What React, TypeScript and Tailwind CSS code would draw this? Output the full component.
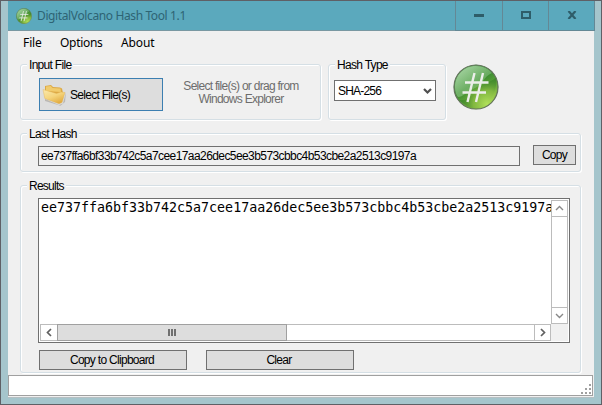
import React from "react";

const HASH = "ee737ffa6bf33b742c5a7cee17aa26dec5ee3b573cbbc4b53cbe2a2513c9197a";

function HashBall({ size, id }: { size: number; id: string }) {
  return (
    <svg width={size} height={size} viewBox="0 0 46 46" className="block shrink-0">
      <defs>
        <linearGradient id={id + "a"} x1="0.1" y1="0" x2="0.75" y2="1">
          <stop offset="0" stopColor="#78b978" />
          <stop offset="0.45" stopColor="#398b30" />
          <stop offset="1" stopColor="#a2d04e" />
        </linearGradient>
        <radialGradient id={id + "b"} cx="0.75" cy="0.88" r="0.62">
          <stop offset="0" stopColor="#b0e05a" />
          <stop offset="0.5" stopColor="#8dc044" stopOpacity="0.8" />
          <stop offset="1" stopColor="#3f8a2a" stopOpacity="0" />
        </radialGradient>
        <linearGradient id={id + "c"} x1="0" y1="0" x2="1" y2="1">
          <stop offset="0" stopColor="#c0e4bc" stopOpacity="0.75" />
          <stop offset="1" stopColor="#7fbc72" stopOpacity="0.3" />
        </linearGradient>
      </defs>
      <circle cx="23" cy="23" r="22.2" fill={`url(#${id}a)`} />
      <path d="M6 36C14 38 21 30 26 24C31 18 40 18 43 13C45 27 37 42 23 45C16 44 11 40 6 36Z" fill="#28701f" opacity="0.45" />
      <circle cx="23" cy="23" r="22" fill={`url(#${id}b)`} />
      <path d="M2 23C2 11 11 2 23 2C30 2 36 5 39 9C31 12 29 22 20 25C13 28 10 33 5 33C3 31 2 27 2 23Z" fill={`url(#${id}c)`} />
      <circle cx="23" cy="23" r="22" fill="none" stroke="#66745f" strokeWidth="1.2" />
      <path d="M21.5 9L14.5 38M30 9L23 38M12 18.5H35.5M9.5 28.5H33" fill="none" stroke="#eceeea" strokeWidth="2.4" />
    </svg>
  );
}

function Folder() {
  return (
    <svg width="26" height="24" viewBox="0 0 26 24" className="block shrink-0">
      <defs>
        <linearGradient id="folderFront" x1="0" y1="0" x2="0.6" y2="1">
          <stop offset="0" stopColor="#fae9ae" />
          <stop offset="0.55" stopColor="#f5d57d" />
          <stop offset="1" stopColor="#e3ad42" />
        </linearGradient>
      </defs>
      <path d="M3 16L17 22L21 20.5L24 9L23 19L18.5 22.7L3 18Z" fill="#9a948a" opacity="0.5" />
      <path d="M3 3L9 2L11 4L18 4.5L20 5.5L21 10L18 17L3 13Z" fill="#dda944" />
      <path d="M4 3.5L8.8 3L10.5 5L18.5 5.6L19 9L4 8Z" fill="#f1cb6c" />
      <path d="M1 6.5L14.5 10.5L19 9L23 9.5L20 19.5L17 20.7L2.8 15.5Z" fill="url(#folderFront)" stroke="#e0b050" strokeWidth="0.4" />
    </svg>
  );
}

function Group({ title, titleClass, className, children }: { title: string; titleClass: string; className: string; children: React.ReactNode }) {
  return (
    <section className={"relative rounded-[3px] border border-[#d5dfe5] shadow-[inset_1px_1px_0_#fff,1px_1px_0_#fff] " + className}>
      <h2 className={"absolute left-[6px] -top-[8px] h-4 bg-[#f0f0f0] px-[2px] leading-[16px] whitespace-nowrap " + titleClass}>{title}</h2>
      {children}
    </section>
  );
}

const chevrons = {
  up: "M1 6L4.5 2.5L8 6",
  down: "M1 3L4.5 6.5L8 3",
  left: "M6 1L2.5 4.5L6 8",
  right: "M3 1L6.5 4.5L3 8",
};

function Chevron({ dir, color = "#606060", width = 1.7 }: { dir: keyof typeof chevrons; color?: string; width?: number }) {
  return (
    <svg width="9" height="9" viewBox="0 0 9 9" className="block shrink-0">
      <path d={chevrons[dir]} fill="none" stroke={color} strokeWidth={width} />
    </svg>
  );
}

function Grip() {
  return (
    <svg width="10" height="10" viewBox="0 0 10 10" className="block" fill="#a0a0a0" shapeRendering="crispEdges">
      <path d="M8 0h2v2h-2zM4 4h2v2h-2zM8 4h2v2h-2zM0 8h2v2h-2zM4 8h2v2h-2zM8 8h2v2h-2z" />
    </svg>
  );
}

const button = "flex items-center justify-center border border-[#707070] bg-[#dddddd] whitespace-nowrap";

export default function App() {
  return (
    <div className="flex h-[405px] w-[602px] flex-col overflow-hidden border border-[#5f6066] bg-[#a5c5cc] px-[7px] font-['Liberation_Sans',Arial,sans-serif] text-[12px] text-black">
      <header className="flex h-[30px] w-[587px] shrink-0 border-b border-[#7998a2] bg-[#5ba9bd] font-['Noto_Sans',sans-serif]">
        <div className="flex flex-1 items-center pl-[8px]">
          <HashBall size={16} id="small" />
          <h1 className="ml-[5px] text-[12px] tracking-[-0.38px] whitespace-nowrap text-[#2e6474]">DigitalVolcano Hash Tool 1.1</h1>
        </div>
        <div className="flex h-[30px] text-[#2e5d69]">
          <button className="flex w-[48px] items-center justify-center border-x border-b border-[#648895]">
            <span className="h-[3px] w-[10px] bg-[#2e5d69]" />
          </button>
          <button className="flex w-[46px] items-center justify-center border-r border-b border-[#648895]">
            <span className="mb-px h-[8px] w-[10px] border-2 border-[#2e5d69]" />
          </button>
          <button className="flex w-[46px] items-center justify-center border-r border-b border-[#648895]">
            <svg width="10" height="8" viewBox="0 0 10 8" className="mb-px">
              <path d="M1.5 0L8.5 8M8.5 0L1.5 8" stroke="currentColor" strokeWidth="2.2" />
            </svg>
          </button>
        </div>
      </header>

      <div className="flex h-[366px] w-[586px] shrink-0 flex-col bg-[#f0f0f0]">
        <nav className="flex h-[33px] shrink-0 pt-[3px] pl-[15px] font-['Noto_Sans',sans-serif] text-[12px] leading-[18px] tracking-[-0.1px]">
          <span className="w-[37px]">File</span>
          <span className="w-[61px] tracking-[-0.3px]">Options</span>
          <span>About</span>
        </nav>

        <main className="flex flex-col pl-[12px]">
          <div className="flex">
            <Group title="Input File" titleClass="tracking-[-0.7px]" className="h-[56px] w-[301px]">
              <div className="flex pt-[13px] pl-[18px]">
                <button className="flex h-[33px] w-[124px] items-center border border-[#3c7fb1] bg-[#dddddd] pl-[2px]">
                  <Folder />
                  <span className="ml-[2px] tracking-[-0.72px] whitespace-nowrap">Select File(s)</span>
                </button>
                <p className="ml-[14px] w-[128px] pt-[2px] text-center leading-[13px] tracking-[-0.72px] whitespace-nowrap text-[#6d6d6d]">
                  Select file(s) or drag from
                  <br />
                  Windows Explorer
                </p>
              </div>
            </Group>
            <Group title="Hash Type" titleClass="tracking-[-0.7px]" className="ml-[7px] h-[56px] w-[118px]">
              <div className="mt-[15px] ml-[5px] flex h-[21px] w-[102px] items-center justify-between border border-[#707070] bg-white pr-[3px] pl-[3px]">
                <span className="tracking-[-0.8px]">SHA-256</span>
                <Chevron dir="down" color="#505050" width={2.2} />
              </div>
            </Group>
            <div className="ml-[7px]">
              <HashBall size={46} id="large" />
            </div>
          </div>

          <Group title="Last Hash" titleClass="tracking-[-0.7px]" className="mt-[13px] h-[39px] w-[561px]">
            <div className="flex pt-[11px] pl-[17px]">
              <div className="mt-px flex h-[20px] w-[482px] items-center border border-[#707070] pl-[2px] tracking-[-0.58px]">{HASH}</div>
              <button className={button + " ml-[13px] h-[20px] w-[43px] tracking-[-0.7px]"}>Copy</button>
            </div>
          </Group>

          <Group title="Results" titleClass="tracking-[-0.75px]" className="mt-[13px] h-[188px] w-[561px]">
            <div className="mt-[12px] ml-[17px] flex h-[145px] w-[532px] flex-col border border-[#707070] bg-white p-px">
              <div className="flex h-[124px]">
                <div className="w-[511px] overflow-hidden pl-px font-['DejaVu_Sans_Mono',monospace] text-[13.3px] leading-[16px] whitespace-nowrap">{HASH}</div>
                <div className="flex h-[124px] w-[17px] flex-col justify-between border border-[#bcbcbc]">
                  <span className="flex h-[16px] items-center justify-center border-b border-[#bcbcbc]">
                    <Chevron dir="up" color="#888888" width={1.4} />
                  </span>
                  <span className="flex h-[16px] items-center justify-center border-t border-[#bcbcbc]">
                    <Chevron dir="down" color="#888888" width={1.4} />
                  </span>
                </div>
              </div>
              <div className="flex h-[17px] bg-[#f0f0f0]">
                <div className="flex w-[511px] border border-[#bcbcbc] bg-white">
                  <span className="flex w-[16px] items-center justify-center">
                    <Chevron dir="left" />
                  </span>
                  <span className="-my-px flex w-[230px] items-center justify-center gap-px border border-[#a0a0a0] bg-[#dddddd]">
                    <i className="h-[7px] w-[2px] bg-[#707070]" />
                    <i className="h-[7px] w-[2px] bg-[#707070]" />
                    <i className="h-[7px] w-[2px] bg-[#707070]" />
                  </span>
                  <span className="ml-auto flex w-[16px] items-center justify-center border-l border-[#bcbcbc]">
                    <Chevron dir="right" />
                  </span>
                </div>
              </div>
            </div>
            <div className="mt-[7px] ml-[18px] flex gap-[19px] tracking-[-0.7px]">
              <button className={button + " h-[20px] w-[148px] pr-[2px]"}>Copy to Clipboard</button>
              <button className={button + " h-[20px] w-[148px] pr-[2px]"}>Clear</button>
            </div>
          </Group>
        </main>

        <footer className="mt-[2px] flex h-[21px] w-[585px] shrink-0 items-end justify-end border border-[#a0a0a0] bg-white pr-px pb-px">
          <Grip />
        </footer>
      </div>
      <div className="h-px w-[586px] shrink-0 bg-[#b5bfc2]" />
    </div>
  );
}
